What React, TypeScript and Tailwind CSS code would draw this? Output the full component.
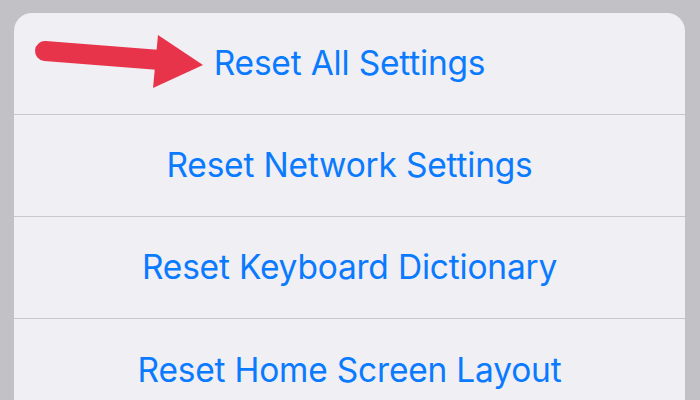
const items = [
  'Reset All Settings',
  'Reset Network Settings',
  'Reset Keyboard Dictionary',
  'Reset Home Screen Layout',
];

const Arrow = () => (
  <svg
    className="absolute left-0 top-0 pointer-events-none"
    width="700"
    height="400"
    viewBox="0 0 700 400"
  >
    <line x1="45" y1="51" x2="160" y2="60" stroke="#e8344a" strokeWidth="20" strokeLinecap="round" />
    <polygon points="158,35 203,65 153,88" fill="#e8344a" />
  </svg>
);

export default function App() {
  return (
    <div className="relative w-[700px] h-[400px] overflow-hidden bg-[#c2c1c6] pt-[13px] px-[14px] font-['Inter','Liberation_Sans',sans-serif]">
      <div className="w-[671px] bg-[#efeff4] rounded-t-[18px]">
        {items.map((label, i) => (
          <div
            key={label}
            className={`h-[102px] flex items-center justify-center ${i < items.length - 1 ? 'border-b border-[#c8c7cc]' : ''}`}
          >
            <span className="text-[#0a7aff] text-[33.5px] tracking-[-0.2px]">{label}</span>
          </div>
        ))}
      </div>
      <Arrow />
    </div>
  );
}
